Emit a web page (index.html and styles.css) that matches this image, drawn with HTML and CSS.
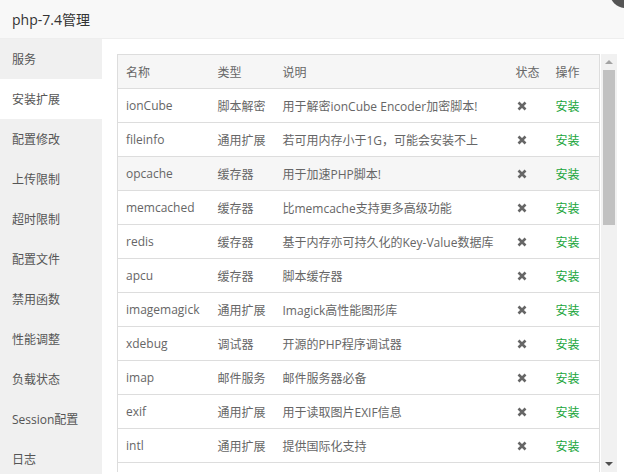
FILE: index.html
```html
<!DOCTYPE html>
<html>
<head>
<meta charset="utf-8">
<link rel="stylesheet" href="styles.css">
</head>
<body>
<div class="win">
  <div class="title">php-7.4管理</div>
  <span class="close"></span>
  <div class="main">
    <ul class="side">
      <li>服务</li>
      <li class="on">安装扩展</li>
      <li>配置修改</li>
      <li>上传限制</li>
      <li>超时限制</li>
      <li>配置文件</li>
      <li>禁用函数</li>
      <li>性能调整</li>
      <li>负载状态</li>
      <li>Session配置</li>
      <li>日志</li>
    </ul>
    <div class="content">
      <div class="scrollbox">
        <div class="tablewrap">
          <table class="tbl">
            <colgroup><col class="c1"><col class="c2"><col class="c3"><col class="c4"><col class="c5"></colgroup>
            <thead>
              <tr><th>名称</th><th>类型</th><th>说明</th><th>状态</th><th>操作</th></tr>
            </thead>
            <tbody>
              <tr><td>ionCube</td><td>脚本解密</td><td>用于解密ionCube Encoder加密脚本!</td><td><svg class="x" viewBox="0 0 10 10"><path d="M1.5 1.5L8.5 8.5M8.5 1.5L1.5 8.5"/></svg></td><td class="op">安装</td></tr>
              <tr><td>fileinfo</td><td>通用扩展</td><td>若可用内存小于1G，可能会安装不上</td><td><svg class="x" viewBox="0 0 10 10"><path d="M1.5 1.5L8.5 8.5M8.5 1.5L1.5 8.5"/></svg></td><td class="op">安装</td></tr>
              <tr class="hover"><td>opcache</td><td>缓存器</td><td>用于加速PHP脚本!</td><td><svg class="x" viewBox="0 0 10 10"><path d="M1.5 1.5L8.5 8.5M8.5 1.5L1.5 8.5"/></svg></td><td class="op">安装</td></tr>
              <tr><td>memcached</td><td>缓存器</td><td>比memcache支持更多高级功能</td><td><svg class="x" viewBox="0 0 10 10"><path d="M1.5 1.5L8.5 8.5M8.5 1.5L1.5 8.5"/></svg></td><td class="op">安装</td></tr>
              <tr><td>redis</td><td>缓存器</td><td>基于内存亦可持久化的Key-Value数据库</td><td><svg class="x" viewBox="0 0 10 10"><path d="M1.5 1.5L8.5 8.5M8.5 1.5L1.5 8.5"/></svg></td><td class="op">安装</td></tr>
              <tr><td>apcu</td><td>缓存器</td><td>脚本缓存器</td><td><svg class="x" viewBox="0 0 10 10"><path d="M1.5 1.5L8.5 8.5M8.5 1.5L1.5 8.5"/></svg></td><td class="op">安装</td></tr>
              <tr><td>imagemagick</td><td>通用扩展</td><td>Imagick高性能图形库</td><td><svg class="x" viewBox="0 0 10 10"><path d="M1.5 1.5L8.5 8.5M8.5 1.5L1.5 8.5"/></svg></td><td class="op">安装</td></tr>
              <tr><td>xdebug</td><td>调试器</td><td>开源的PHP程序调试器</td><td><svg class="x" viewBox="0 0 10 10"><path d="M1.5 1.5L8.5 8.5M8.5 1.5L1.5 8.5"/></svg></td><td class="op">安装</td></tr>
              <tr><td>imap</td><td>邮件服务</td><td>邮件服务器必备</td><td><svg class="x" viewBox="0 0 10 10"><path d="M1.5 1.5L8.5 8.5M8.5 1.5L1.5 8.5"/></svg></td><td class="op">安装</td></tr>
              <tr><td>exif</td><td>通用扩展</td><td>用于读取图片EXIF信息</td><td><svg class="x" viewBox="0 0 10 10"><path d="M1.5 1.5L8.5 8.5M8.5 1.5L1.5 8.5"/></svg></td><td class="op">安装</td></tr>
              <tr><td>intl</td><td>通用扩展</td><td>提供国际化支持</td><td><svg class="x" viewBox="0 0 10 10"><path d="M1.5 1.5L8.5 8.5M8.5 1.5L1.5 8.5"/></svg></td><td class="op">安装</td></tr>
              <tr class="empty"><td></td><td></td><td></td><td></td><td></td></tr>
            </tbody>
          </table>
        </div>
        <div class="sbar">
          <div class="arrow up"></div>
          <div class="track"><div class="thumb"></div></div>
          <div class="arrow down"></div>
        </div>
      </div>
    </div>
  </div>
</div>
</body>
</html>
```

FILE: styles.css
```css
html, body {
  margin: 0;
  padding: 0;
  background: #fff;
  overflow: hidden;
}
.win {
  position: relative;
  width: 624px;
  height: 474px;
  overflow: hidden;
  font-family: "Open Sans", "Noto Sans CJK SC", sans-serif;
  font-size: 12px;
  color: #555;
}
.title {
  height: 38px;
  line-height: 40px;
  padding-left: 12px;
  background: #f8f8f8;
  border-bottom: 1px solid #eee;
  font-size: 14px;
  color: #333;
  overflow: hidden;
}
.close {
  position: absolute;
  right: -16px;
  top: -22px;
  width: 30px;
  height: 30px;
  border-radius: 50%;
  background: #555;
}
.main {
  display: flex;
  height: 435px;
}
.side {
  list-style: none;
  margin: 0;
  padding: 0;
  width: 102px;
  background: #f0f0f0;
  flex: none;
}
.side li {
  height: 40px;
  line-height: 42px;
  padding-left: 12px;
  color: #555;
  overflow: hidden;
}
.side li.on {
  background: #fff;
}
.content {
  flex: 1;
  padding: 15px 7px 0 15px;
  min-width: 0;
}
.scrollbox {
  display: flex;
  height: 418px;
}
.tablewrap {
  width: 483px;
  overflow: hidden;
  flex: none;
}
.tbl {
  border-collapse: collapse;
  table-layout: fixed;
  width: 483px;
  border: 1px solid #ddd;
}
.c1 { width: 92px; }
.c2 { width: 65px; }
.c3 { width: 233px; }
.c4 { width: 40px; }
.c5 { width: 52px; }
.tbl th, .tbl td {
  height: 33px;
  padding: 0 0 0 8px;
  text-align: left;
  font-weight: normal;
  white-space: nowrap;
  overflow: hidden;
  color: #666;
  border-bottom: 1px solid #ddd;
}
.tbl th {
  background: #f6f6f6;
}
.tbl tr.hover td {
  background: #f6f6f6;
}
.tbl td.op {
  color: #20a53a;
}
.x {
  width: 10px;
  height: 10px;
  display: block;
  margin-left: 1px;
}
.x path {
  stroke: #666;
  stroke-width: 2.6;
  fill: none;
}
.sbar {
  width: 16px;
  margin-left: 1px;
  display: flex;
  flex-direction: column;
  background: #f1f1f1;
  flex: none;
}
.arrow {
  height: 16px;
  flex: none;
  display: flex;
  align-items: center;
  justify-content: center;
}
.arrow::before {
  content: "";
  width: 0;
  height: 0;
  border-left: 4px solid transparent;
  border-right: 4px solid transparent;
}
.arrow.up::before {
  border-bottom: 4px solid #a3a3a3;
}
.arrow.down::before {
  border-top: 4px solid #505050;
}
.track {
  flex: 1;
  padding: 0 2px;
}
.thumb {
  height: 155px;
  background: #c1c1c1;
}
```
